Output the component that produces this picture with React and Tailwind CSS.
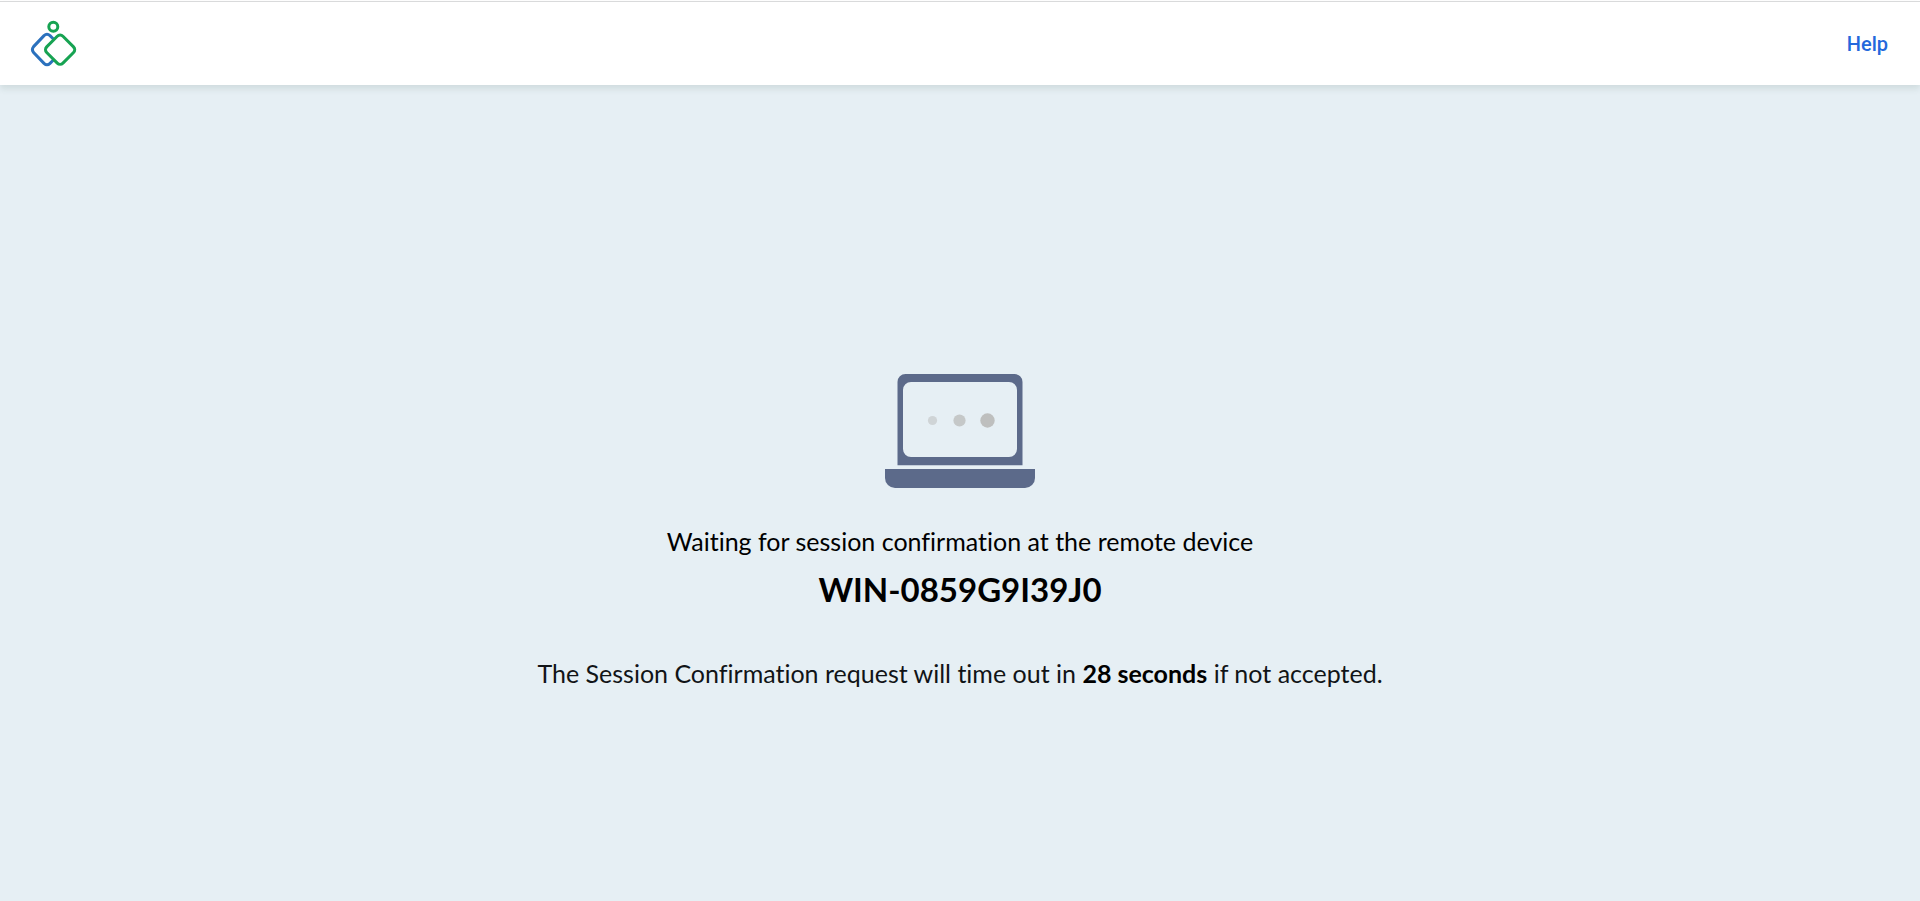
function Logo() {
  return (
    <svg viewBox="0 0 48 48" className="size-12" fill="none" strokeWidth="3" aria-hidden="true">
      <path
        d="M23.4 19 L20 15.6 Q17 13 14 15.6 L3.6 26.6 Q1.2 29.6 3.6 32.6 L14 43.4 Q17 46.2 20 43.4 L23.4 40"
        stroke="#2b71bd"
      />
      <rect x="18.6" y="18.2" width="23" height="23" rx="4" transform="rotate(45 30.1 29.7)" stroke="#17a352" />
      <circle cx="23.3" cy="6.8" r="4.5" stroke="#17a352" />
    </svg>
  );
}

function Laptop() {
  return (
    <svg viewBox="0 0 150 114" className="w-[150px]" aria-hidden="true">
      <path
        fillRule="evenodd"
        fill="#5c6a8a"
        d="M12.5 91.3V8a8 8 0 0 1 8-8h109a8 8 0 0 1 8 8v83.3zM26 8a8 8 0 0 0-8 8v59a8 8 0 0 0 8 8h98a8 8 0 0 0 8-8V16a8 8 0 0 0-8-8z"
      />
      <path fill="#5c6a8a" d="M0 95h150v9a10 10 0 0 1-10 10H10a10 10 0 0 1-10-10z" />
      <circle cx="47.5" cy="46.5" r="4.6" fill="#cfd4d6" />
      <circle cx="74.5" cy="46.5" r="6.1" fill="#c5c8c8" />
      <circle cx="102.5" cy="46.5" r="7.2" fill="#bebfbe" />
    </svg>
  );
}

export default function App() {
  return (
    <div className="flex min-h-screen flex-col bg-white pt-px font-['Lato',sans-serif] text-black">
      <header className="relative z-10 flex h-21 items-center justify-between border-t border-[#d9dadb] bg-white pr-8 pl-[30px] shadow-[0_4px_6px_rgba(60,90,70,0.12)]">
        <Logo />
        <a href="#help" className="font-['Roboto',sans-serif] text-xl font-medium text-[#2468dc]">
          Help
        </a>
      </header>
      <main className="flex flex-1 flex-col items-center justify-center bg-[#e6eff4] px-6 pt-19 text-center [font-variant-ligatures:none]">
        <Laptop />
        <p className="mt-[37px] text-[25px] leading-8">Waiting for session confirmation at the remote device</p>
        <h1 className="mt-3 text-[33px] leading-10 font-bold">WIN-0859G9I39J0</h1>
        <p className="mt-12 text-[25px] leading-8 text-[#111417]">
          The Session Confirmation request will time out in{" "}
          <strong className="font-bold text-black">28 seconds</strong> if not accepted.
        </p>
      </main>
    </div>
  );
}
